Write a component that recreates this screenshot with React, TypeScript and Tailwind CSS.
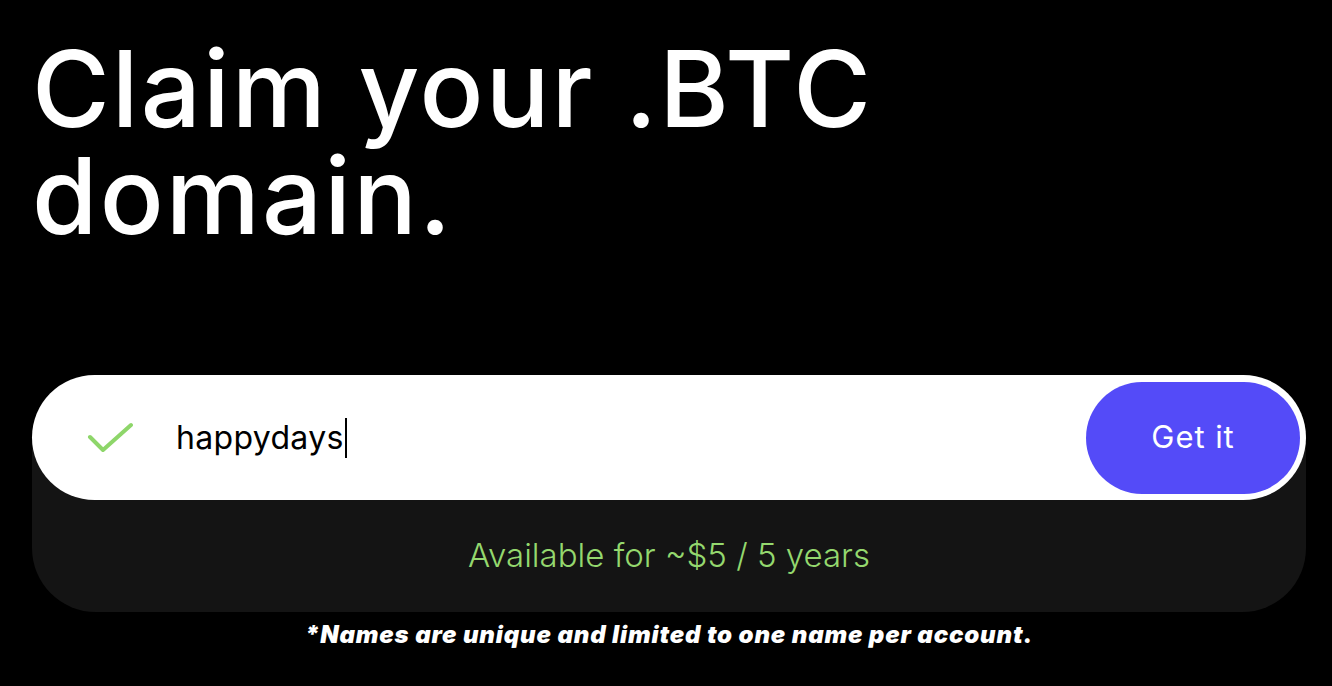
import React from 'react';

export default function App() {
  return (
    <div className="min-h-screen w-full bg-black pl-8 pt-[35px] font-['Inter',sans-serif]">
      {/* Hero heading */}
      <h1 className="text-[106px] font-medium leading-[107px] tracking-[0.02em] text-white">
        Claim your .BTC
        <br />
        domain.
      </h1>

      {/* Search box */}
      <div className="mt-[126px] w-[1274px] rounded-[62px] rounded-b-[64px] bg-[#141414]">
        <div className="flex h-[125px] items-center rounded-full bg-white pl-[55px] pr-[6px]">
          <svg width="46" height="32" viewBox="0 0 46 32" fill="none" className="shrink-0">
            <polyline
              points="3,15 16,28 44,3"
              stroke="#8ed66a"
              strokeWidth="4"
              strokeLinecap="round"
              strokeLinejoin="round"
            />
          </svg>
          <div className="ml-[43px] flex items-center">
            <span className="text-[32px] leading-none tracking-[0.01em] text-black">happydays</span>
            <span className="ml-[1px] h-[40px] w-[2px] bg-black" />
          </div>
          <button className="ml-auto flex h-[112px] w-[214px] items-center justify-center rounded-full bg-[#544bf8] text-[31px] tracking-[0.03em] text-white">
            Get it
          </button>
        </div>
        <div className="flex h-[112px] items-center justify-center">
          <span className="text-[33px] font-light text-[#94d86e]">Available for ~$5 / 5 years</span>
        </div>
      </div>

      <p className="mt-[8px] w-[1274px] text-center text-[24px] font-black italic leading-[30px] tracking-[0.035em] text-white">
        *Names are unique and limited to one name per account.
      </p>
    </div>
  );
}
